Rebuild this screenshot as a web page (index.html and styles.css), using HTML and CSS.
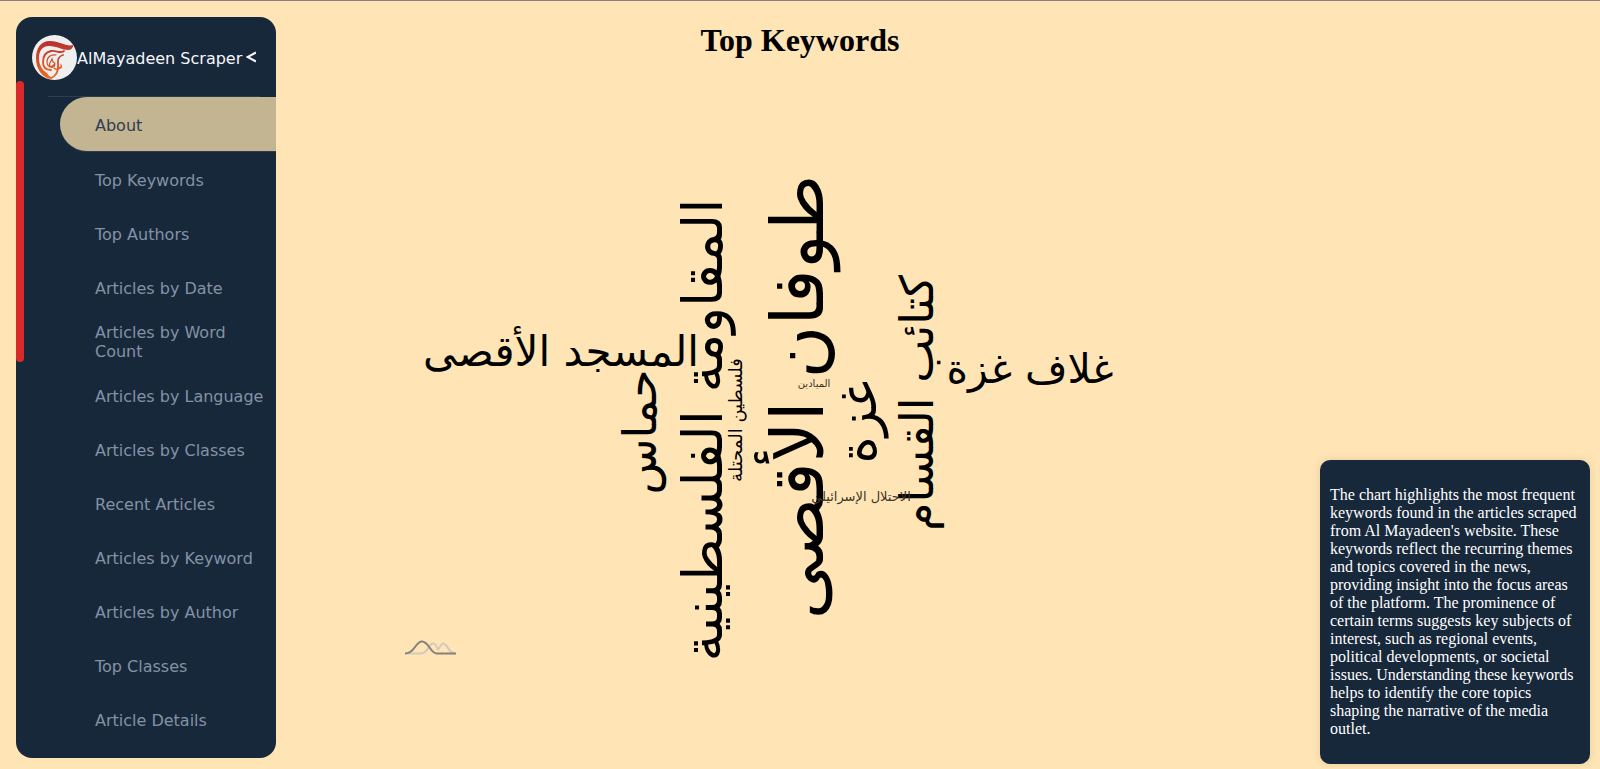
FILE: index.html
```html
<!DOCTYPE html>
<html lang="en">
<head>
<meta charset="utf-8">
<title>Top Keywords</title>
<link rel="stylesheet" href="styles.css">
</head>
<body>
<div class="page">
  <aside class="sidebar">
    <header class="brand">
      <svg class="brand-logo" viewBox="0 0 45 45" aria-hidden="true">
        <defs><linearGradient id="flame" gradientUnits="userSpaceOnUse" x1="0" y1="6" x2="0" y2="44"><stop offset="0" stop-color="#b5302f"/><stop offset="1" stop-color="#f26a22"/></linearGradient></defs>
        <circle cx="22.500" cy="22.500" r="22.500" fill="#efefef"/>
        <path fill="url(#flame)" d="M41.500 10C34 12 28 6 18 6 9 6 4 13 4 23c0 11 6 19 14 21l3-1c-3-1-5-3-6-5-5-3-8-8-8-15 0-8 4-12 10-12 8 0 13 4 19 4 3 0 5-2 5.500-5z"/>
        <g fill="none" stroke="url(#flame)" stroke-linecap="round">
          <path stroke-width="1.800" d="M32 16c-4 3-8-1-13 0-5 1-8 5-8 11 0 5 3 8 8 8"/>
          <path stroke-width="1.800" d="M31 20c-3 1-5 3-5 6v6c0 6-2 9-7 11"/>
          <path stroke-width="1.200" d="M24 20c-5-1-9 2-9 7 0 4 3 6 6 5s2-4 0-5l-1-3c-1 3-4 5-2 7 2 1 4-1 5-3"/>
          <path stroke-width="1.400" d="M22 33c2 2 5 2 6-1 0 2 2 1 1-2"/>
        </g>
      </svg>
      <span class="brand-name">AlMayadeen Scraper</span>
      <button class="collapse" type="button" aria-label="Collapse menu"><svg viewBox="0 0 10 12" aria-hidden="true"><path d="M10 1.500L1.500 6 10 10.500"/></svg></button>
    </header>
    <div class="scroll-thumb"></div>
    <nav class="menu">
      <a class="item active" href="#about">About</a>
      <a class="item" href="#keywords">Top Keywords</a>
      <a class="item" href="#authors">Top Authors</a>
      <a class="item" href="#date">Articles by Date</a>
      <a class="item" href="#word-count">Articles by Word Count</a>
      <a class="item" href="#language">Articles by Language</a>
      <a class="item" href="#classes">Articles by Classes</a>
      <a class="item" href="#recent">Recent Articles</a>
      <a class="item" href="#keyword">Articles by Keyword</a>
      <a class="item" href="#author">Articles by Author</a>
      <a class="item" href="#top-classes">Top Classes</a>
      <a class="item" href="#details">Article Details</a>
    </nav>
  </aside>
  <main class="content">
    <h1 class="title">Top Keywords</h1>
    <svg class="cloud" viewBox="276 70 1044 690" role="img" aria-label="Keyword cloud">
      <g class="words" lang="ar">
        <text font-size="72" transform="translate(823 397) rotate(-90)">طوفان الأقصى</text>
        <text font-size="55" transform="translate(722 430) rotate(-90)">المقاومة الفلسطينية</text>
        <text font-size="46" transform="translate(933 403) rotate(-90)">كتائب القسام</text>
        <text font-size="46" transform="translate(656 432) rotate(-90)">حماس</text>
        <text font-size="52" transform="translate(876 422) rotate(-90)">غزة</text>
        <text font-size="18" transform="translate(742 420) rotate(-90)">فلسطين المحتلة</text>
        <text font-size="42" x="561" y="366">المسجد الأقصى</text>
        <text font-size="41" x="1030" y="383">غلاف غزة</text>
        <text class="minor" font-size="13" x="861" y="501">الاحتلال الإسرائيلي</text>
        <text class="minor" font-size="10" x="814" y="387">الميادين</text>
      </g>
      <g class="chart-mark">
        <path class="back" d="M406 653.500h14c9 0 8-10 13-10 4 0 4 6 5 6s3-6 5-6c5 0 5 10 12 10"/>
        <path class="front" d="M405 653.500c10 0 10-12 17-12s8 12 15 12h19"/>
      </g>
    </svg>
  </main>
  <aside class="note"><p>The chart highlights the most frequent keywords found in the articles scraped from Al Mayadeen's website. These keywords reflect the recurring themes and topics covered in the news, providing insight into the focus areas of the platform. The prominence of certain terms suggests key subjects of interest, such as regional events, political developments, or societal issues. Understanding these keywords helps to identify the core topics shaping the narrative of the media outlet.</p></aside>
</div>
</body>
</html>
```

FILE: styles.css
```css
* {
  box-sizing: border-box;
}

body {
  margin: 0;
  background: #ffe4b5;
  font-family: "Liberation Serif", serif;
}

.page {
  display: grid;
  grid-template-columns: 260px 1fr 270px;
  height: 100vh;
  padding: 16px 10px 5px 16px;
  border-top: 1px solid #8f7a80;
  overflow: hidden;
}

.sidebar {
  position: relative;
  min-height: 0;
  margin-bottom: 6px;
  border-radius: 16px;
  background: #18283b;
  overflow: hidden;
  font-family: "DejaVu Sans", Verdana, sans-serif;
  font-size: 16px;
  line-height: 19px;
}

.brand {
  display: flex;
  align-items: center;
  height: 80px;
  padding: 0 16px;
  color: #f5f6fa;
  white-space: nowrap;
}

.brand::after {
  content: "";
  position: absolute;
  top: 79px;
  left: 32px;
  right: 16px;
  height: 1px;
  background: #2c3e50;
}

.brand-logo {
  flex: none;
  width: 45px;
  height: 45px;
}

.brand-name {
  padding-top: 2px;
}

.collapse {
  display: flex;
  margin-left: 4px;
  padding: 0;
  border: 0;
  background: none;
}

.collapse svg {
  width: 10px;
  height: 12px;
  fill: none;
  stroke: #f5f6fa;
  stroke-width: 2;
}

.scroll-thumb {
  position: absolute;
  top: 64px;
  left: 0;
  width: 8px;
  height: 281px;
  border-radius: 4px;
  background: #d72a2a;
}

.menu {
  display: flex;
  flex-direction: column;
  padding-left: 44px;
}

.item {
  display: flex;
  flex: none;
  align-items: center;
  height: 54px;
  padding: 2px 0 0 35px;
  color: #8392a5;
  text-decoration: none;
}

.active {
  margin-bottom: 1px;
  border-radius: 27px 0 0 27px;
  background: #c4b592;
  box-shadow: 0 1px #2c3e50;
  color: #2c3e50;
}

.content {
  min-width: 0;
}

.title {
  margin: 5px 0 11px;
  padding-left: 4px;
  font-size: 32px;
  line-height: 37px;
  text-align: center;
}

.cloud {
  display: block;
  width: 100%;
}

.words {
  font-family: "DejaVu Sans", sans-serif;
  text-anchor: middle;
  fill: #000;
}

.minor {
  fill: #3b352a;
}

.chart-mark {
  fill: none;
  stroke-width: 2;
}

.back {
  stroke: #d0cac0;
}

.front {
  stroke: #84807c;
}

.note {
  align-self: end;
  padding: 10px;
  border-radius: 10px;
  background: #18283b;
  box-shadow: 0 0 10px rgba(0, 0, 0, 0.1);
  color: #fff;
  font-size: 16px;
  line-height: 18px;
}

.note p {
  margin: 16px 0;
}
```
